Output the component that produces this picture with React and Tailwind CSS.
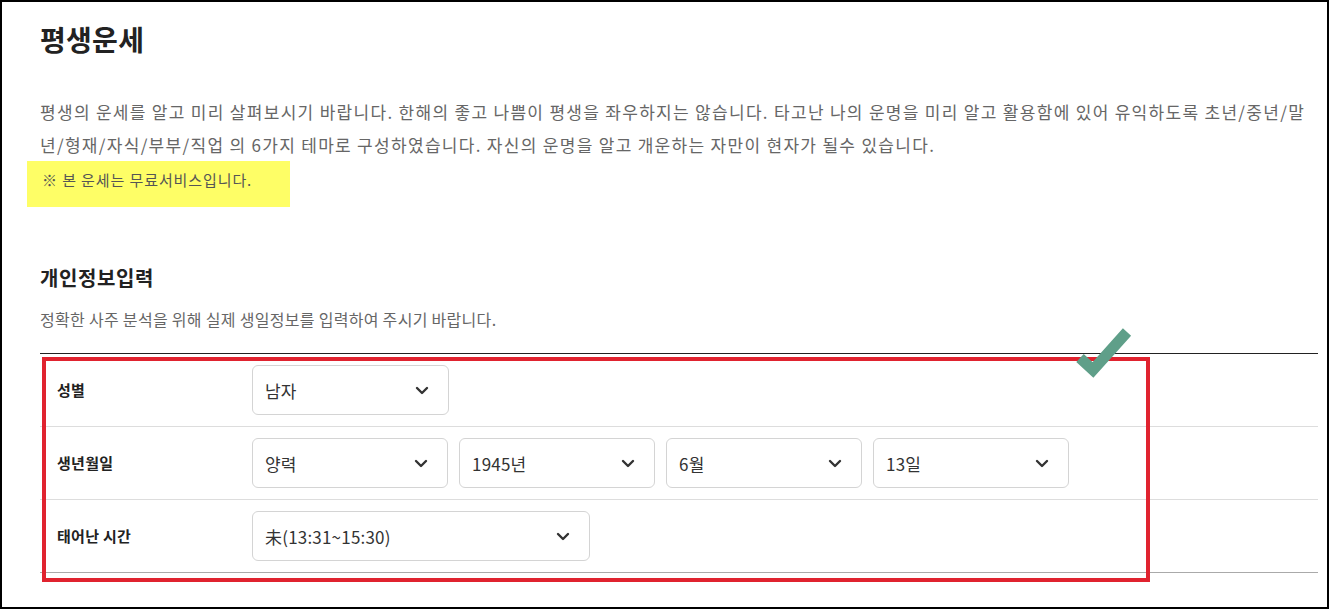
import React from 'react'

const font = { fontFamily: '"Noto Sans CJK KR", "Noto Sans", sans-serif' }

const Chevron = () => (
  <svg width="14" height="9" viewBox="0 0 14 9" className="shrink-0">
    <path d="M2 2l5 5 5-5" fill="none" stroke="#333" strokeWidth="2.4" strokeLinecap="round" strokeLinejoin="round" />
  </svg>
)

const Select = ({ value, width }) => (
  <div
    className={`flex items-center justify-between h-[50px] pl-[12px] pr-[19px] bg-white border border-[#d4d4d4] rounded-[6px] ${width}`}
  >
    <span className="text-[17px] text-[#333] leading-none tracking-[0.2px]">{value}</span>
    <Chevron />
  </div>
)

const Row = ({ label, children, last }) => (
  <div className={`flex items-center h-[73px] border-b ${last ? 'border-[#aaa]' : 'border-[#ddd]'}`}>
    <div className="w-[212px] pl-[17px] text-[15px] font-bold text-[#222] tracking-[0.3px]">{label}</div>
    <div className="flex items-center gap-[11px]">{children}</div>
  </div>
)

export default function App() {
  return (
    <div style={font} className="w-full h-[609px] bg-white border-2 border-black overflow-hidden">
      <div className="pl-[38px] pr-[9px]">
        {/* Title */}
        <h1 className="mt-[16px] text-[28px] font-bold text-[#222] leading-[42px] tracking-[0.3px]">평생운세</h1>

        {/* Description */}
        <p className="mt-[35px] text-[17px] text-[#666] leading-[33px] tracking-[1.3px]">
          평생의 운세를 알고 미리 살펴보시기 바랍니다. 한해의 좋고 나쁨이 평생을 좌우하지는 않습니다. 타고난 나의 운명을 미리 알고 활용함에 있어 유익하도록 초년/중년/말년/형재/자식/부부/직업 의 6가지 테마로 구성하였습니다. 자신의 운명을 알고 개운하는 자만이 현자가 될수 있습니다.
        </p>

        {/* Free notice */}
        <div className="ml-[-13px] w-[263px] h-[46px] bg-[#fefe66] pl-[15px] pt-[6px]">
          <span className="text-[15px] text-[#555] leading-[24px] tracking-[0.9px]">※ 본 운세는 무료서비스입니다.</span>
        </div>

        {/* Personal info */}
        <h2 className="mt-[57px] text-[20px] font-bold text-[#222] leading-[28px] tracking-[0.6px]">개인정보입력</h2>
        <p className="mt-[15px] text-[16px] text-[#666] leading-[24px] tracking-[0.3px]">
          정확한 사주 분석을 위해 실제 생일정보를 입력하여 주시기 바랍니다.
        </p>

        <div className="relative mt-[22px] border-t border-[#222]">
          <Row label="성별">
            <Select value="남자" width="w-[197px]" />
          </Row>
          <Row label="생년월일">
            <Select value="양력" width="w-[196px]" />
            <Select value="1945년" width="w-[196px]" />
            <Select value="6월" width="w-[196px]" />
            <Select value="13일" width="w-[196px]" />
          </Row>
          <Row label="태어난 시간" last>
            <Select value="未(13:31~15:30)" width="w-[338px]" />
          </Row>

          {/* Annotation overlay */}
          <div className="absolute left-[2px] top-[3px] w-[1108px] h-[225px] border-4 border-[#e0232f] pointer-events-none" />
          <svg className="absolute left-[1030px] top-[-28px]" width="70" height="60" viewBox="0 0 70 60">
            <polyline points="10,32 23,44 57,6" fill="none" stroke="#5f9f89" strokeWidth="11" strokeLinejoin="miter" strokeLinecap="butt" />
          </svg>
        </div>
      </div>
    </div>
  )
}
